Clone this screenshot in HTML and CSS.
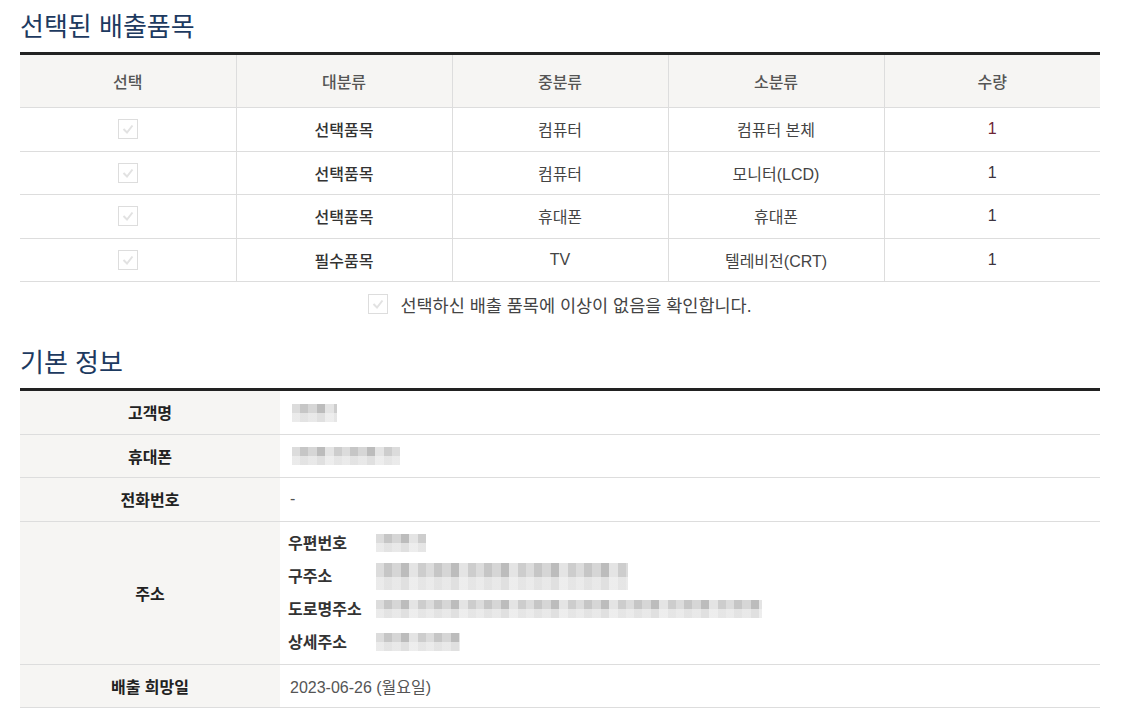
FILE: index.html
```html
<!DOCTYPE html>
<html lang="ko">

<head>
    <meta charset="UTF-8">
    <meta name="viewport" content="width=device-width, initial-scale=1.0">
    <title>배출 신청 확인</title>
    <link rel="stylesheet" href="styles.css">
</head>

<body>
    <div class="wrap">
        <h2 class="tit">선택된 배출품목</h2>
        <table class="itemtable">
            <thead>
                <tr>
                    <th>선택</th>
                    <th>대분류</th>
                    <th>중분류</th>
                    <th>소분류</th>
                    <th>수량</th>
                </tr>
            </thead>
            <tbody>
                <tr>
                    <td><span class="chk"></span></td>
                    <td class="strong">선택품목</td>
                    <td>컴퓨터</td>
                    <td>컴퓨터 본체</td>
                    <td class="qty red">1</td>
                </tr>
                <tr>
                    <td><span class="chk"></span></td>
                    <td class="strong">선택품목</td>
                    <td>컴퓨터</td>
                    <td>모니터(LCD)</td>
                    <td class="qty">1</td>
                </tr>
                <tr>
                    <td><span class="chk"></span></td>
                    <td class="strong">선택품목</td>
                    <td>휴대폰</td>
                    <td>휴대폰</td>
                    <td class="qty">1</td>
                </tr>
                <tr>
                    <td><span class="chk"></span></td>
                    <td class="strong">필수품목</td>
                    <td>TV</td>
                    <td>텔레비전(CRT)</td>
                    <td class="qty">1</td>
                </tr>
            </tbody>
        </table>
        <div class="agree">
            <span class="chk"></span>
            <span>선택하신 배출 품목에 이상이 없음을 확인합니다.</span>
        </div>

        <h2 class="tit tit2">기본 정보</h2>
        <table class="infotable">
            <tr>
                <th>고객명</th>
                <td><span class="blur b-name"></span></td>
            </tr>
            <tr>
                <th>휴대폰</th>
                <td><span class="blur b-phone"></span></td>
            </tr>
            <tr>
                <th>전화번호</th>
                <td>-</td>
            </tr>
            <tr>
                <th>주소</th>
                <td class="addr">
                    <dl>
                        <dt>우편번호</dt>
                        <dd><span class="blur b-zip"></span></dd>
                        <dt>구주소</dt>
                        <dd><span class="blur b-old"></span></dd>
                        <dt>도로명주소</dt>
                        <dd><span class="blur b-road"></span></dd>
                        <dt>상세주소</dt>
                        <dd><span class="blur b-detail"></span></dd>
                    </dl>
                </td>
            </tr>
            <tr>
                <th>배출 희망일</th>
                <td>2023-06-26 (월요일)</td>
            </tr>
        </table>
    </div>
</body>

</html>
```

FILE: styles.css
```css
html,
body,
div,
h2,
dl,
dt,
dd,
table,
th,
td {
    margin: 0;
    padding: 0;
}

body {
    font-family: "Liberation Sans", "Noto Sans CJK KR", sans-serif;
    color: #444;
    background: #fff;
}

.wrap {
    width: 1080px;
    padding: 11px 20px 20px;
}

.tit {
    font-size: 26px;
    line-height: 32px;
    font-weight: normal;
    color: #1d3a60;
    margin-bottom: 9px;
}
.tit2 { margin-top: 33px; }

table {
    width: 100%;
    border-collapse: collapse;
    border-top: 3px solid #222;
    font-size: 16px;
}

/* 배출품목 */
.itemtable th {
    width: 20%;
    height: 52px;
    background: #f6f5f3;
    font-weight: 500;
    color: #555;
    border-bottom: 1px solid #ddd;
    border-left: 1px solid #ddd;
}
.itemtable td {
    height: 42.5px;
    text-align: center;
    border-bottom: 1px solid #ddd;
    border-left: 1px solid #ddd;
    color: #444;
}
.itemtable th:first-child,
.itemtable td:first-child { border-left: 0; }
.itemtable td.strong { color: #333; font-weight: 500; }
.itemtable td.qty { color: #3d3440; }
.itemtable td.red { color: #6e2535; }

.chk {
    display: inline-block;
    width: 18px;
    height: 18px;
    border: 1px solid #ddd;
    vertical-align: middle;
    background: #fff url("data:image/svg+xml,%3Csvg xmlns='http://www.w3.org/2000/svg' width='18' height='18'%3E%3Cpath d='M4.5 9 L8 12.5 L13.5 5.5' fill='none' stroke='%23e2e2e2' stroke-width='2'/%3E%3C/svg%3E") no-repeat center;
}

.agree {
    display: flex;
    justify-content: center;
    align-items: center;
    gap: 12px;
    height: 20px;
    margin-top: 12px;
    font-size: 17.5px;
    color: #444;
}

/* 기본 정보 */
.infotable th {
    width: 260px;
    height: 42.5px;
    background: #f6f5f3;
    color: #222;
    font-weight: 700;
    border-bottom: 1px solid #ddd;
}
.infotable td {
    padding: 0 10px;
    border-bottom: 1px solid #ddd;
    color: #555;
}
.infotable td.addr { padding: 5px 8px; }
.addr dl {
    display: grid;
    grid-template-columns: 88px 1fr;
    line-height: 33px;
}
.addr dt { font-weight: 700; color: #333; }
.addr dd { display: flex; align-items: center; }

.blur {
    display: inline-block;
    height: 18px;
    vertical-align: middle;
    background:
        linear-gradient(#fff0 50%, #f2f2f2aa 50%),
        repeating-linear-gradient(90deg, #dcdcdc 0 8px, #c6c6c6 8px 16px, #d6d6d6 16px 25px, #bcbcbc 25px 33px, #e4e4e4 33px 42px, #cdcdcd 42px 50px);
}
.b-name { width: 45px; margin-left: 2px; }
.b-phone { width: 108px; margin-left: 2px; }
.b-zip { width: 50px; }
.b-old { width: 252px; height: 27px; }
.b-road { width: 386px; }
.b-detail { width: 84px; }
```
